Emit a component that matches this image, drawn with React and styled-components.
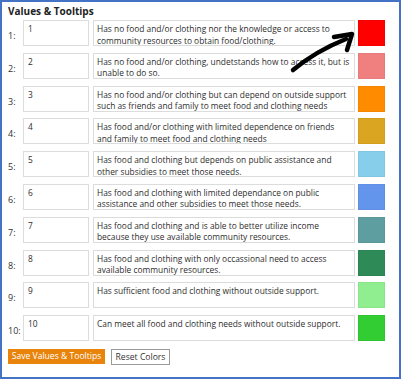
import styled, { createGlobalStyle } from "styled-components";

const GlobalStyle = createGlobalStyle`
  html, body {
    margin: 0;
    padding: 0;
    background: #ffffff;
  }
  * {
    box-sizing: border-box;
  }
`;

const Panel = styled.div`
  position: relative;
  width: 401px;
  height: 379px;
  border: 2px solid #4472c4;
  padding: 2px 6px 0 6px;
  font-family: "Open Sans", "Noto Sans", sans-serif;
  color: #333333;
  background: #ffffff;
`;

const Title = styled.h2`
  margin: 0 0 2px 0;
  font-size: 10px;
  font-weight: 700;
  line-height: 14px;
  color: #222222;
`;

const Rows = styled.div`
  display: flex;
  flex-direction: column;
  gap: 6.8px;
`;

const Row = styled.div`
  display: flex;
  align-items: center;
  height: 26px;
`;

const Label = styled.span`
  width: 15px;
  flex: none;
  font-size: 9px;
  color: #333333;
  white-space: nowrap;
  margin-top: 5px;
`;

const Field = styled.div`
  flex: none;
  height: 26px;
  border: 1px solid #dcdcdc;
  padding: 2px 4px 0 4px;
  font-size: 8.4px;
  line-height: 11.5px;
  color: #2e2e2e;
  background: #ffffff;
  overflow: hidden;
`;

const ValueField = styled(Field)`
  width: 66px;
`;

const TipField = styled(Field)`
  width: 262px;
  margin-left: 4px;
  padding-left: 3px;
`;

const Swatch = styled.div`
  flex: none;
  width: 27px;
  height: 26px;
  margin-left: 3px;
  background: ${(p) => p.$color};
  border: 1px solid rgba(0, 0, 0, 0.04);
`;

const Actions = styled.div`
  display: flex;
  gap: 6px;
  margin-top: 8px;
`;

const SaveButton = styled.button`
  height: 15px;
  width: 97px;
  padding: 0;
  border: none;
  background: #e8830c;
  color: #ffffff;
  font-family: inherit;
  font-size: 8.6px;
  line-height: 15px;
  cursor: pointer;
`;

const ResetButton = styled.button`
  height: 16px;
  width: 59px;
  padding: 0;
  border: 1px solid #9a9a9a;
  background: #ffffff;
  color: #333333;
  font-family: inherit;
  font-size: 8.6px;
  line-height: 14px;
  cursor: pointer;
`;

const Arrow = styled.svg`
  position: absolute;
  left: -2px;
  top: -2px;
  pointer-events: none;
`;

const levels = [
  { color: "#ff0000", text: "Has no food and/or clothing nor the knowledge or access to community resources to obtain food/clothing." },
  { color: "#f08080", text: "Has no food and/or clothing, undetstands how to access it, but is unable to do so." },
  { color: "#ff8c00", text: "Has no food and/or clothing but can depend on outside support such as friends and family to meet food and clothing needs" },
  { color: "#daa520", text: "Has food and/or clothing with limited dependence on friends and family to meet food and clothing needs" },
  { color: "#87ceeb", text: "Has food and clothing but depends on public assistance and other subsidies to meet those needs." },
  { color: "#6495ed", text: "Has food and clothing with limited dependance on public assistance and other subsidies to meet those needs." },
  { color: "#5f9ea0", text: "Has food and clothing and is able to better utilize income because they use available community resources." },
  { color: "#2e8b57", text: "Has food and clothing with only occassional need to access available community resources." },
  { color: "#90ee90", text: "Has sufficient food and clothing without outside support." },
  { color: "#32cd32", text: "Can meet all food and clothing needs without outside support." },
];

export default function App() {
  return (
    <>
      <GlobalStyle />
      <Panel>
        <Title>Values &amp; Tooltips</Title>
        <Rows>
          {levels.map((l, i) => (
            <Row key={i}>
              <Label>{i + 1}:</Label>
              <ValueField>{i + 1}</ValueField>
              <TipField>{l.text}</TipField>
              <Swatch $color={l.color} />
            </Row>
          ))}
        </Rows>
        <Actions>
          <SaveButton>Save Values &amp; Tooltips</SaveButton>
          <ResetButton>Reset Colors</ResetButton>
        </Actions>
        <Arrow width="401" height="379" viewBox="0 0 401 379">
          <path d="M293 70 Q316 51 346 39" fill="none" stroke="#000" strokeWidth="4.5" strokeLinecap="round" />
          <path d="M334 37 L352 34 L347 50" fill="none" stroke="#000" strokeWidth="4.5" strokeLinecap="round" strokeLinejoin="round" />
        </Arrow>
      </Panel>
    </>
  );
}
